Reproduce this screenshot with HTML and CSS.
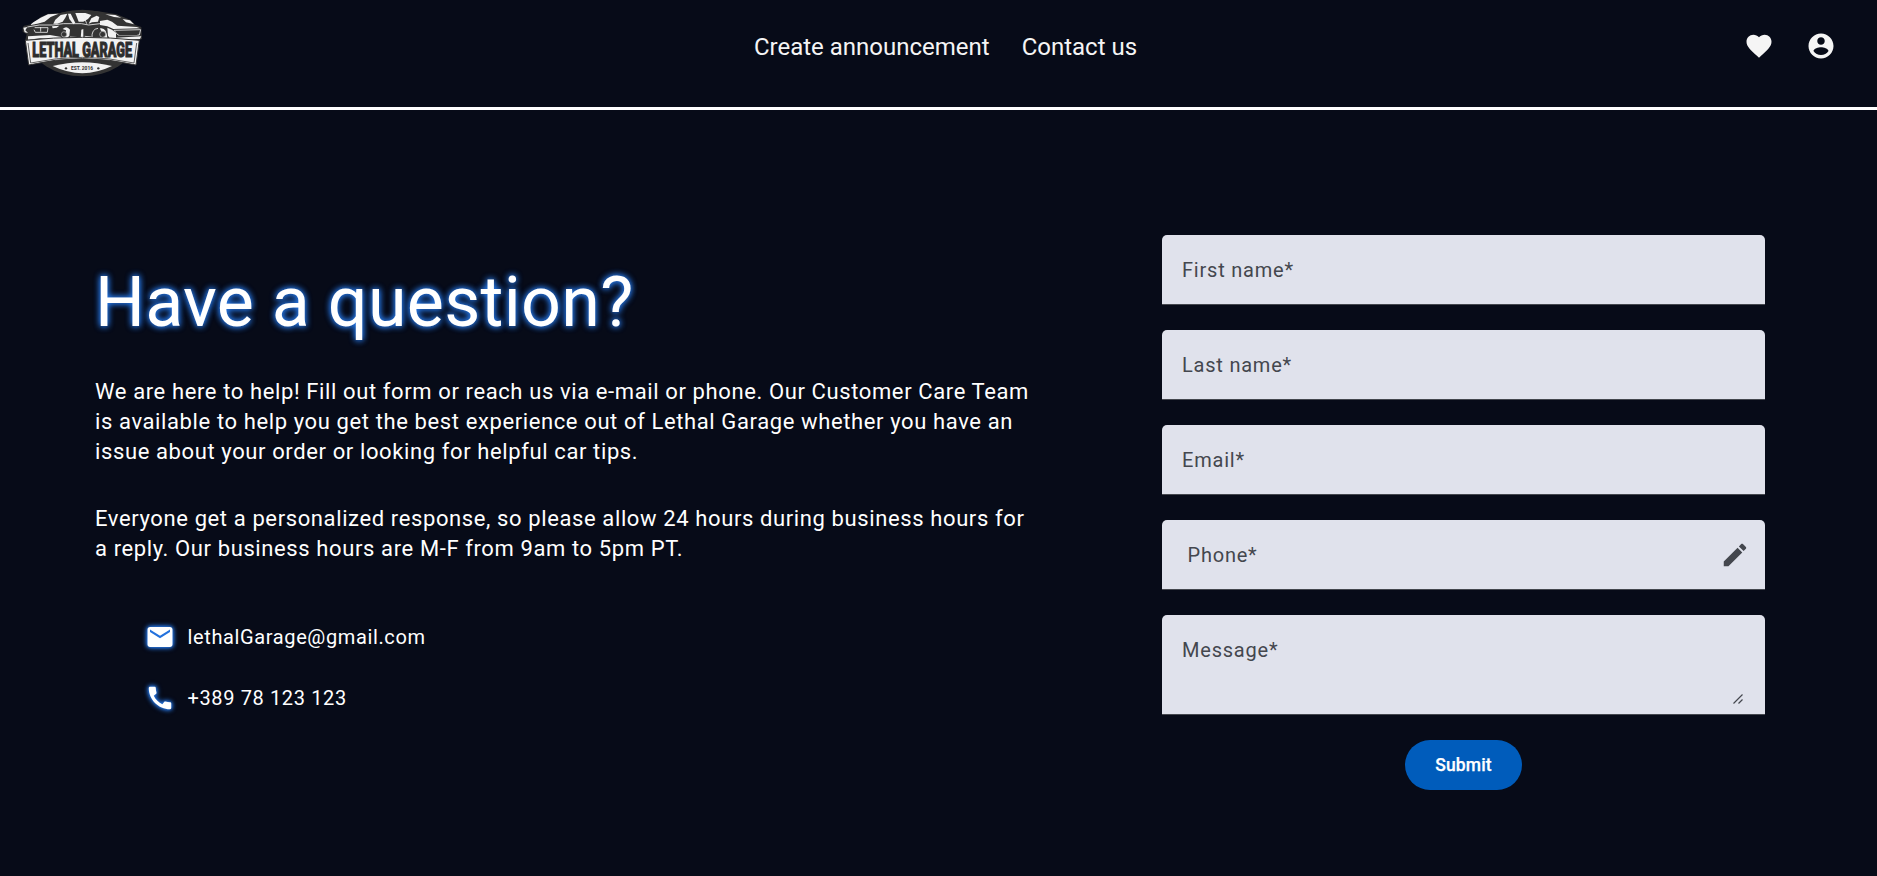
FILE: index.html
```html
<!DOCTYPE html>
<html lang="en">
<head>
<meta charset="utf-8">
<title>Lethal Garage - Contact us</title>
<link rel="stylesheet" href="styles.css">
</head>
<body>
<header class="topbar">
  <a class="brand" aria-label="Lethal Garage">
    <svg class="logo" viewBox="6 12 360 204">
      <ellipse cx="187" cy="114" rx="152" ry="100" fill="#333"/>
      <path d="M8 68L12 62L40 56L62 36L85 26L120 24L150 18L230 18L290 28L330 44L346 60L364 66L366 102L340 112L187 100L30 112L16 104L20 88L8 80Z" fill="#333"/>
      <g fill="#f2f2f2">
        <path d="M62 38L84 28L116 26L92 36L74 50L52 56L30 60L40 52Z"/>
        <path d="M106 44L122 30L142 26L136 38L128 50L112 56L100 56Z"/>
        <path d="M144 26L152 26L166 54L160 58L148 42Z"/>
        <path d="M166 24L196 24L214 30L204 42L190 50L176 50Z"/>
        <path d="M214 40L230 32L238 36L234 50L216 52L206 56Z"/>
        <path d="M240 48L262 44L276 50L292 62L350 66L360 70L280 72L262 64L240 60Z"/>
        <path d="M256 28L286 30L304 38L282 36Z"/>
        <path d="M308 42L330 46L342 58L318 52Z"/>
        <path d="M10 68L22 66L16 76L24 84L14 82Z"/>
        <path d="M96 64L118 62L110 68L98 70Z"/>
        <path d="M128 72Q140 60 150 74L148 92L136 104L124 102L136 92L138 76Z"/>
        <path d="M184 74L190 72L190 100L182 102Z"/>
        <path d="M240 70Q260 66 262 100L244 102Q254 84 242 76Z"/>
        <path d="M262 68L276 74L288 84L288 98L364 94L360 102L272 104L264 92Z"/>
        <path d="M24 94L90 90L124 96L124 102L60 100L24 104Z"/>
      </g>
      <g fill="none" stroke="#eee" stroke-width="2.500">
        <path d="M44 68H84L82 82H46L42 74M22 66L58 60L98 60L130 56L184 56M184 56L206 60L240 56M188 24L200 56M216 100Q214 72 234 70M282 76L362 74L358 90H294Z"/>
        <path d="M62 66V80M150 96L180 98M194 94L214 96"/>
      </g>
      <path d="M290 80L356 78L352 90H298Z" fill="#333"/>
      <circle cx="132" cy="88" r="8" fill="#333" stroke="#bbb" stroke-width="2"/>
      <circle cx="248" cy="88" r="9" fill="#333" stroke="#ccc" stroke-width="2"/>
      <path d="M16 106Q187 88 358 106L348 180Q187 142 26 180Z" fill="#f2f2f2" stroke="#333" stroke-width="3"/>
      <path d="M24 114L32 174Q187 140 342 174L350 114" fill="none" stroke="#444" stroke-width="2.500"/>
      <path d="M98 183Q187 160 276 183Q187 226 98 183Z" fill="#f2f2f2"/>
      <text class="logo-name" x="37" y="155" textLength="299" lengthAdjust="spacingAndGlyphs">LETHAL GARAGE</text>
      <text class="logo-year" x="153" y="195" textLength="66" lengthAdjust="spacingAndGlyphs">EST. 2016</text>
      <circle cx="138" cy="190" r="3.500" fill="#333"/><circle cx="235" cy="190" r="3.500" fill="#333"/>
    </svg>
  </a>
  <nav class="menu"><a>Create announcement</a><a>Contact us</a></nav>
  <div class="actions">
    <svg class="icon" viewBox="0 0 24 24"><path d="m12 21.350-1.450-1.320C5.400 15.360 2 12.280 2 8.500 2 5.420 4.420 3 7.500 3c1.740 0 3.410.81 4.500 2.090C13.090 3.810 14.760 3 16.500 3 19.580 3 22 5.420 22 8.500c0 3.780-3.400 6.860-8.550 11.540L12 21.350z"/></svg>
    <svg class="icon" viewBox="0 0 24 24"><path d="M12 2C6.480 2 2 6.480 2 12s4.480 10 10 10 10-4.480 10-10S17.520 2 12 2zm0 3c1.660 0 3 1.340 3 3s-1.340 3-3 3-3-1.340-3-3 1.340-3 3-3zm0 14.200c-2.500 0-4.710-1.280-6-3.220.03-1.990 4-3.080 6-3.080 1.990 0 5.970 1.090 6 3.080-1.290 1.940-3.500 3.220-6 3.220z"/></svg>
  </div>
</header>
<main class="contact">
  <section class="info">
    <h1>Have a question?</h1>
    <p>We are here to help! Fill out form or reach us via e-mail or phone. Our Customer Care Team<br>is available to help you get the best experience out of Lethal Garage whether you have an<br>issue about your order or looking for helpful car tips.</p>
    <p>Everyone get a personalized response, so please allow 24 hours during business hours for<br>a reply. Our business hours are M-F from 9am to 5pm PT.</p>
    <ul class="reach">
      <li><svg class="icon glow" viewBox="0 0 24 24"><path d="M20 4H4c-1.100 0-1.990.9-1.990 2L2 18c0 1.100.9 2 2 2h16c1.100 0 2-.9 2-2V6c0-1.100-.9-2-2-2zm0 4-8 5-8-5V6l8 5 8-5v2z"/></svg><span>lethalGarage@gmail.com</span></li>
      <li><svg class="icon glow" viewBox="0 0 24 24"><path d="M20.010 15.380c-1.230 0-2.420-.2-3.530-.56-.35-.12-.74-.03-1.010.24l-1.570 1.970c-2.830-1.350-5.480-3.900-6.890-6.830l1.950-1.660c.27-.28.35-.67.24-1.020-.37-1.110-.56-2.300-.56-3.530 0-.54-.45-.99-.99-.99H4.190C3.650 3 3 3.240 3 3.990 3 13.280 10.730 21 20.010 21c.71 0 .99-.63.99-1.180v-3.450c0-.54-.45-.99-.99-.99z"/></svg><span>+389 78 123 123</span></li>
    </ul>
  </section>
  <form class="form">
    <label class="field">First name*</label>
    <label class="field">Last name*</label>
    <label class="field">Email*</label>
    <label class="field field-phone"><span>Phone*</span>
      <svg class="icon edit" viewBox="0 0 24 24"><path d="M3 17.250V21h3.750L17.810 9.940l-3.750-3.750L3 17.250zM20.710 7.040c.39-.39.39-1.020 0-1.410l-2.340-2.340c-.39-.39-1.020-.39-1.410 0l-1.830 1.830 3.750 3.750 1.830-1.830z"/></svg></label>
    <label class="field field-message"><span>Message*</span>
      <svg class="grip" viewBox="0 0 10 10"><path d="M0.500 9.500L9.500 .5M5.500 9.500L9.500 5.500"/></svg></label>
    <button class="submit" type="button">Submit</button>
  </form>
</main>
</body>
</html>
```
FILE: styles.css
```css
* { box-sizing: border-box; }
body {
  margin: 0;
  height: 876px;
  overflow: hidden;
  background: #070b18;
  color: #fff;
  font-family: Roboto, sans-serif;
}
.topbar {
  height: 110px;
  border-bottom: 3px solid #fff;
  display: grid;
  grid-template-columns: 1fr auto 1fr;
  align-items: start;
  padding: 0 41px 0 22px;
}
.logo { display: block; width: 120px; height: 68px; margin-top: 9px; }
.logo-name { font: 900 60px Roboto, sans-serif; fill: #2d2d2d; stroke: #2d2d2d; stroke-width: 3px; }
.logo-year { font: 700 17px Roboto, sans-serif; fill: #2d2d2d; }
.menu { display: flex; gap: 32px; padding-top: 29px; margin-left: 33px; font-size: 24px; line-height: 36px; color: #f5f5f5; }
.actions { display: flex; justify-content: flex-end; gap: 32px; padding-top: 31px; }
.icon { display: block; width: 30px; height: 30px; fill: #f5f5f5; flex: none; }
.contact { display: flex; justify-content: space-between; padding: 125px 112px 0 95px; }
.info { width: 960px; padding-top: 29px; }
h1 { margin: 0; font-size: 70px; font-weight: 400; line-height: 76px; letter-spacing: .28px; text-shadow: 0 0 7px #2678e8, 0 0 6px #2678e8; }
p { margin: 0 0 37px; font-size: 22px; line-height: 30px; letter-spacing: .612px; white-space: nowrap; }
h1 + p { margin-top: 37px; }
.reach { list-style: none; margin: 58px 0 0; padding: 0 0 0 50px; display: grid; gap: 31px; }
.reach li { display: flex; align-items: center; gap: 12.500px; height: 30px; font-size: 20px; letter-spacing: .625px; }
.glow { fill: #fff; filter: drop-shadow(0 0 2.500px #2678e8) drop-shadow(0 0 1.500px #2678e8); }
.form { width: 603px; display: flex; flex-direction: column; gap: 25px; }
.field {
  height: 70px;
  padding: 0 20px;
  display: flex;
  align-items: center;
  background: #e0e2ec;
  color: #44474e;
  border-bottom: 1px solid #44474e;
  border-radius: 5px 5px 0 0;
  font-size: 20px;
  letter-spacing: .78px;
}
.field-phone { justify-content: space-between; padding: 0 15px 0 25.500px; }
.edit { fill: #44474e; }
.field-message { height: 100px; align-items: flex-start; justify-content: space-between; padding: 23px 22px 0 20px; }
.grip { width: 10px; height: 10px; margin-top: 56px; fill: none; stroke: #44474e; stroke-width: 1.200; }
.submit {
  align-self: center;
  width: 117px;
  height: 50px;
  border: 0;
  border-radius: 25px;
  background: #005cbb;
  color: #fff;
  font: 500 17.500px Roboto, sans-serif;
  letter-spacing: .12px;
  -webkit-text-stroke: .25px #fff;
}
```
